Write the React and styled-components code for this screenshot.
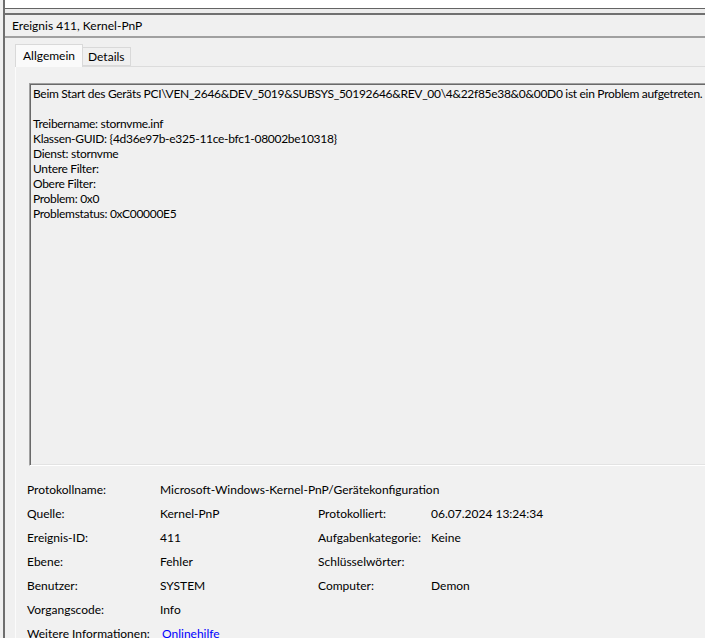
import React from "react";
import styled, { createGlobalStyle } from "styled-components";

const GlobalStyle = createGlobalStyle`
  html, body {
    margin: 0;
    padding: 0;
    overflow: hidden;
    background: #f0f0f0;
  }
  body {
    font-family: Lato, "Noto Sans", sans-serif;
    font-size: 12px;
    color: #000;
  }
`;

const Page = styled.div`
  width: 705px;
  height: 638px;
  overflow: hidden;
  background: #f0f0f0;
  padding-left: 3px;
  box-sizing: border-box;
`;

const Frame = styled.div`
  width: 760px;
  height: 100%;
  border-left: 2px solid #6e6e6e;
  display: flex;
  flex-direction: column;
`;

const ListPane = styled.div`
  flex-shrink: 0;
  height: 8px;
  background: #fff;
  border-bottom: 1px solid #646464;
`;

const Splitter = styled.div`
  flex-shrink: 0;
  height: 4px;
  background: #ececec;
`;

const DetailPane = styled.div`
  flex-shrink: 0;
  border-top: 2px solid #707070;
  display: flex;
  flex-direction: column;
`;

const PaneHeader = styled.div`
  height: 21px;
  line-height: 21px;
  padding-left: 7px;
  border-bottom: 2px solid #a0a0a0;
`;

const PaneBody = styled.div`
  padding: 6px 0 0 10px;
  display: flex;
  flex-direction: column;
`;

const TabRow = styled.div`
  display: flex;
  align-items: flex-end;
  height: 22px;
  position: relative;
  z-index: 1;
`;

const Tab = styled.div`
  box-sizing: border-box;
  height: ${(p) => (p.$active ? "23px" : "19px")};
  line-height: ${(p) => (p.$active ? "21px" : "18px")};
  padding: 0 ${(p) => (p.$active ? "7px" : "5px")};
  background: ${(p) => (p.$active ? "#fafafa" : "#f0f0f0")};
  border: 1px solid #d9d9d9;
  border-bottom: ${(p) => (p.$active ? "none" : "1px solid #d9d9d9")};
  margin-bottom: ${(p) => (p.$active ? "-1px" : "0")};
  border-left: ${(p) => (p.$active ? "1px solid #d9d9d9" : "none")};
`;

const TabPanel = styled.div`
  border-top: 1px solid #dcdcdc;
  border-left: 1px solid #fbfbfb;
  background: #f1f1f1;
  padding: 16px 0 0 13px;
  display: flex;
  flex-direction: column;
`;

const MessageBox = styled.div`
  height: 383px;
  box-sizing: border-box;
  background: #f0f0f0;
  border-top: 1px solid #a0a0a0;
  border-left: 1px solid #a0a0a0;
  border-bottom: 1px solid #ffffff;
  box-shadow: inset 1px 1px 0 #696969, inset 0 -1px 0 #e3e3e3;
  padding: 2px 3px;
  line-height: 15px;
  letter-spacing: -0.3px;
  white-space: pre;
`;

const Fields = styled.div`
  display: grid;
  grid-template-columns: 133px 158px 113px auto;
  grid-auto-rows: 24px;
  align-items: center;
  margin: 11px 0 0 -2px;
  white-space: nowrap;
`;

const Label = styled.div``;

const Value = styled.div`
  grid-column: ${(p) => p.$span || "auto"};
`;

const LinkText = styled.span`
  color: #0000ff;
  margin-left: 2px;
`;

const message = `Beim Start des Geräts PCI\\VEN_2646&DEV_5019&SUBSYS_50192646&REV_00\\4&22f85e38&0&00D0 ist ein Problem aufgetreten.

Treibername: stornvme.inf
Klassen-GUID: {4d36e97b-e325-11ce-bfc1-08002be10318}
Dienst: stornvme
Untere Filter:
Obere Filter:
Problem: 0x0
Problemstatus: 0xC00000E5`;

export default function App() {
  return (
    <>
      <GlobalStyle />
      <Page>
        <Frame>
          <ListPane />
          <Splitter />
          <DetailPane>
            <PaneHeader>Ereignis 411, Kernel-PnP</PaneHeader>
            <PaneBody>
              <TabRow>
                <Tab $active>Allgemein</Tab>
                <Tab>Details</Tab>
              </TabRow>
              <TabPanel>
                <MessageBox>{message}</MessageBox>
                <Fields>
                  <Label>Protokollname:</Label>
                  <Value $span="2 / 5">Microsoft-Windows-Kernel-PnP/Gerätekonfiguration</Value>
                  <Label>Quelle:</Label>
                  <Value>Kernel-PnP</Value>
                  <Label>Protokolliert:</Label>
                  <Value>06.07.2024 13:24:34</Value>
                  <Label>Ereignis-ID:</Label>
                  <Value>411</Value>
                  <Label>Aufgabenkategorie:</Label>
                  <Value>Keine</Value>
                  <Label>Ebene:</Label>
                  <Value>Fehler</Value>
                  <Label>Schlüsselwörter:</Label>
                  <Value></Value>
                  <Label>Benutzer:</Label>
                  <Value>SYSTEM</Value>
                  <Label>Computer:</Label>
                  <Value>Demon</Value>
                  <Label>Vorgangscode:</Label>
                  <Value $span="2 / 5">Info</Value>
                  <Label>Weitere Informationen:</Label>
                  <Value $span="2 / 5">
                    <LinkText>Onlinehilfe</LinkText>
                  </Value>
                </Fields>
              </TabPanel>
            </PaneBody>
          </DetailPane>
        </Frame>
      </Page>
    </>
  );
}
